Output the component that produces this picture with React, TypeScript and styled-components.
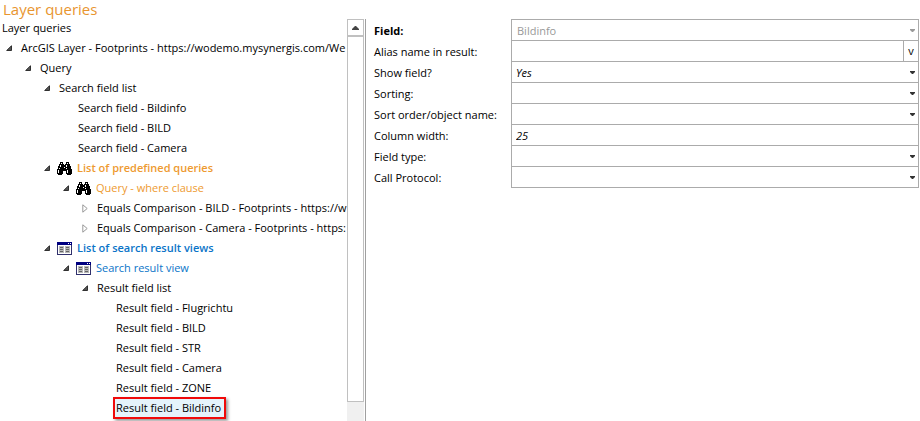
import React from "react";
import styled, { createGlobalStyle, css } from "styled-components";

const GlobalStyle = createGlobalStyle`
  * { box-sizing: border-box; }
  body {
    margin: 0;
    background: #fff;
    color: #000;
    font-family: "Open Sans", "Noto Sans", sans-serif;
    font-size: 11px;
  }
  button, input, select { font: inherit; color: inherit; }
`;

const Page = styled.main`
  display: flex;
  flex-direction: column;
  min-height: 100vh;
`;

const Title = styled.h1`
  margin: 0;
  padding-left: 3px;
  height: 19px;
  line-height: 19px;
  font-size: 15px;
  font-weight: 400;
  color: #e8952f;
`;

const Columns = styled.div`
  flex: 1;
  display: grid;
  grid-template-columns: minmax(0, 366fr) minmax(0, 554fr);
`;

const TreePane = styled.section`
  display: flex;
  border-right: 1px solid #a0a0a0;
`;

const TreeBody = styled.div`
  flex: 1;
  min-width: 0;
  overflow: hidden;
`;

const TreeCaption = styled.h2`
  margin: 0;
  padding: 0 0 1px 2px;
  font-size: 11px;
  font-weight: 400;
  line-height: 18px;
`;

type Tone = "plain" | "orange" | "blue";
const tones: Record<Tone, string> = { plain: "#000", orange: "#ee9a30", blue: "#0a74c8" };

const Row = styled.div<{ $level: number; $tone: Tone; $bold?: boolean }>`
  display: flex;
  align-items: center;
  height: 20px;
  padding-left: ${(p) => p.$level * 19 + 2}px;
  color: ${(p) => tones[p.$tone]};
  font-weight: ${(p) => (p.$bold ? 600 : 400)};
  white-space: nowrap;
`;

const Toggle = styled.button<{ $beforeIcon: boolean }>`
  display: flex;
  align-items: center;
  justify-content: center;
  flex: none;
  width: 14px;
  height: 16px;
  margin-right: ${(p) => (p.$beforeIcon ? 3 : 5)}px;
  padding: 0;
  border: 0;
  background: none;
`;

const ToggleSpace = styled.span`
  flex: none;
  width: 19px;
`;

const RowIcon = styled.span`
  display: flex;
  flex: none;
  width: 20px;
`;

const RowText = styled.span<{ $selected?: boolean }>`
  line-height: 18px;
  ${(p) =>
    p.$selected &&
    css`
      margin-left: -3px;
      padding: 0 3px 0 1px;
      border: 2px solid #f00a0a;
      background: #e5f3fb;
      box-shadow: 2px 2px 3px #999;
    `}
`;

const ScrollBar = styled.div`
  display: flex;
  flex-direction: column;
  flex: none;
  width: 17px;
  margin-right: 1px;
  background: #f0f0f0;
`;

const ScrollUp = styled.button`
  display: flex;
  align-items: center;
  justify-content: center;
  width: 17px;
  height: 17px;
  padding: 0;
  border: 1px solid #c0c0c0;
  background: #fff;
`;

const ScrollThumb = styled.div`
  flex: 0 0 91%;
  border: 1px solid #c0c0c0;
  background: #fff;
`;

const Form = styled.form`
  display: flex;
  flex-direction: column;
  padding: 0 1px 0 8px;
`;

const FormRow = styled.div`
  display: grid;
  grid-template-columns: 137px minmax(0, 1fr);
  height: 21px;
`;

const Label = styled.label<{ $bold?: boolean }>`
  padding-top: 1px;
  line-height: 21px;
  font-weight: ${(p) => (p.$bold ? 700 : 400)};
`;

const Field = styled.div`
  position: relative;
  display: flex;
  height: 22px;
  border: 1px solid #ababab;
`;

const controlStyle = css`
  flex: 1;
  min-width: 0;
  width: 100%;
  height: 20px;
  padding: 0 4px;
  border: 0;
  border-radius: 0;
  background: transparent;
  font-style: italic;
  outline-offset: -2px;
`;

const Select = styled.select`
  ${controlStyle}
  appearance: none;
  &:disabled {
    padding-left: 5px;
    color: #999;
    font-style: normal;
    opacity: 1;
  }
`;

const Input = styled.input`
  ${controlStyle}
`;

const FieldButton = styled.button`
  flex: none;
  width: 15px;
  padding: 0;
  border: 0;
  border-left: 1px solid #ababab;
  background: #fff;
  line-height: 18px;
`;

const Caret = styled.svg`
  position: absolute;
  top: 9px;
  right: 3px;
  pointer-events: none;
`;

function Expanded() {
  return (
    <svg width="6" height="6" viewBox="0 0 6 6" aria-hidden="true">
      <path d="M5.5.7v4.8H.7z" fill="#555" stroke="#222" strokeWidth=".9" />
    </svg>
  );
}

function Collapsed() {
  return (
    <svg width="6" height="9" viewBox="0 0 6 9" aria-hidden="true">
      <path d="M.8.8v7.4l4.4-3.7z" fill="#fff" stroke="#999" />
    </svg>
  );
}

function Binoculars() {
  return (
    <svg width="15" height="13" viewBox="0 0 15 13" shapeRendering="crispEdges" aria-hidden="true">
      <path
        fill="#000"
        d="M3 0h3v2h1v1h1V2h1V0h3v2h1v2h1v3h1v5h-1v1h-4v-1H9V9H6v3H5v1H1v-1H0V7h1V4h1V2h1z"
      />
      <path
        fill="#fff"
        d="M4 1h1v1H4zM3 3h1v2H3zM2 6h1v1H2zM1 8h1v3H1zM7 5h1v1H7zM10 1h1v1h-1zM9 3h1v2H9zM9 6h1v1H9zM10 8h1v3h-1z"
      />
    </svg>
  );
}

function TableIcon() {
  return (
    <svg width="15" height="13" viewBox="0 0 15 13" shapeRendering="crispEdges" aria-hidden="true">
      <path fill="#30306c" d="M0 0h15v13H0z" />
      <path fill="#fff" d="M1 3h13v9H1z" />
      <path fill="#000080" d="M0 0h15v3H0z" />
      <path fill="#fff" d="M11 1h1v1h-1zM13 1h1v1h-1z" />
      <path fill="#b8b8b8" d="M2 4h5v7H2zM8 4h5v7H8z" />
      <path
        fill="#666"
        d="M3 5h3v1H3zM3 7h3v1H3zM3 9h3v1H3zM9 5h3v1H9zM9 7h3v1H9zM9 9h3v1H9z"
      />
    </svg>
  );
}

interface Node {
  level: number;
  text: string;
  state?: "open" | "closed";
  icon?: "find" | "table";
  tone?: Tone;
  bold?: boolean;
  selected?: boolean;
}

const nodes: Node[] = [
  { level: 0, text: "ArcGIS Layer - Footprints - https://wodemo.mysynergis.com/We", state: "open" },
  { level: 1, text: "Query", state: "open" },
  { level: 2, text: "Search field list", state: "open" },
  { level: 3, text: "Search field - Bildinfo" },
  { level: 3, text: "Search field - BILD" },
  { level: 3, text: "Search field - Camera" },
  { level: 2, text: "List of predefined queries", state: "open", icon: "find", tone: "orange", bold: true },
  { level: 3, text: "Query - where clause", state: "open", icon: "find", tone: "orange" },
  { level: 4, text: "Equals Comparison - BILD - Footprints - https://w", state: "closed" },
  { level: 4, text: "Equals Comparison - Camera - Footprints - https:", state: "closed" },
  { level: 2, text: "List of search result views", state: "open", icon: "table", tone: "blue", bold: true },
  { level: 3, text: "Search result view", state: "open", icon: "table", tone: "blue" },
  { level: 4, text: "Result field list", state: "open" },
  { level: 5, text: "Result field - Flugrichtu" },
  { level: 5, text: "Result field - BILD" },
  { level: 5, text: "Result field - STR" },
  { level: 5, text: "Result field - Camera" },
  { level: 5, text: "Result field - ZONE" },
  { level: 5, text: "Result field - Bildinfo", selected: true },
];

interface FieldDef {
  id: string;
  label: string;
  kind: "select" | "text";
  value?: string;
  disabled?: boolean;
  action?: string;
}

const fields: FieldDef[] = [
  { id: "field", label: "Field:", kind: "select", value: "Bildinfo", disabled: true },
  { id: "alias", label: "Alias name in result:", kind: "text", action: "v" },
  { id: "show", label: "Show field?", kind: "select", value: "Yes" },
  { id: "sorting", label: "Sorting:", kind: "select" },
  { id: "order", label: "Sort order/object name:", kind: "select" },
  { id: "width", label: "Column width:", kind: "text", value: "25" },
  { id: "type", label: "Field type:", kind: "select" },
  { id: "protocol", label: "Call Protocol:", kind: "select" },
];

function TreeRow({ node }: { node: Node }) {
  return (
    <Row
      role="treeitem"
      aria-level={node.level + 1}
      aria-selected={!!node.selected}
      aria-expanded={node.state ? node.state === "open" : undefined}
      $level={node.level}
      $tone={node.tone ?? "plain"}
      $bold={node.bold}
    >
      {node.state ? (
        <Toggle
          type="button"
          aria-label={node.state === "open" ? "Collapse" : "Expand"}
          $beforeIcon={!!node.icon}
        >
          {node.state === "open" ? <Expanded /> : <Collapsed />}
        </Toggle>
      ) : (
        <ToggleSpace />
      )}
      {node.icon && <RowIcon>{node.icon === "find" ? <Binoculars /> : <TableIcon />}</RowIcon>}
      <RowText $selected={node.selected}>{node.text}</RowText>
    </Row>
  );
}

function FieldRow({ def }: { def: FieldDef }) {
  return (
    <FormRow>
      <Label htmlFor={def.id} $bold={def.disabled}>
        {def.label}
      </Label>
      <Field>
        {def.kind === "select" ? (
          <>
            <Select id={def.id} defaultValue={def.value ?? ""} disabled={def.disabled}>
              <option value={def.value ?? ""}>{def.value ?? ""}</option>
            </Select>
            <Caret width="5" height="3" viewBox="0 0 5 3" aria-hidden="true">
              <path d="M0 0h5v1L3 3H2L0 1z" fill={def.disabled ? "#999" : "#333"} />
            </Caret>
          </>
        ) : (
          <Input id={def.id} type="text" defaultValue={def.value ?? ""} />
        )}
        {def.action && <FieldButton type="button">{def.action}</FieldButton>}
      </Field>
    </FormRow>
  );
}

export default function App() {
  return (
    <Page>
      <GlobalStyle />
      <Title>Layer queries</Title>
      <Columns>
        <TreePane>
          <TreeBody>
            <TreeCaption>Layer queries</TreeCaption>
            <div role="tree" aria-label="Layer queries">
              {nodes.map((node, i) => (
                <TreeRow key={i} node={node} />
              ))}
            </div>
          </TreeBody>
          <ScrollBar>
            <ScrollUp type="button" aria-label="Scroll up">
              <svg width="7" height="4" viewBox="0 0 7 4" aria-hidden="true">
                <path d="M3 0h1l3 3v1H0V3z" fill="#444" />
              </svg>
            </ScrollUp>
            <ScrollThumb />
          </ScrollBar>
        </TreePane>
        <Form>
          {fields.map((def) => (
            <FieldRow key={def.id} def={def} />
          ))}
        </Form>
      </Columns>
    </Page>
  );
}
